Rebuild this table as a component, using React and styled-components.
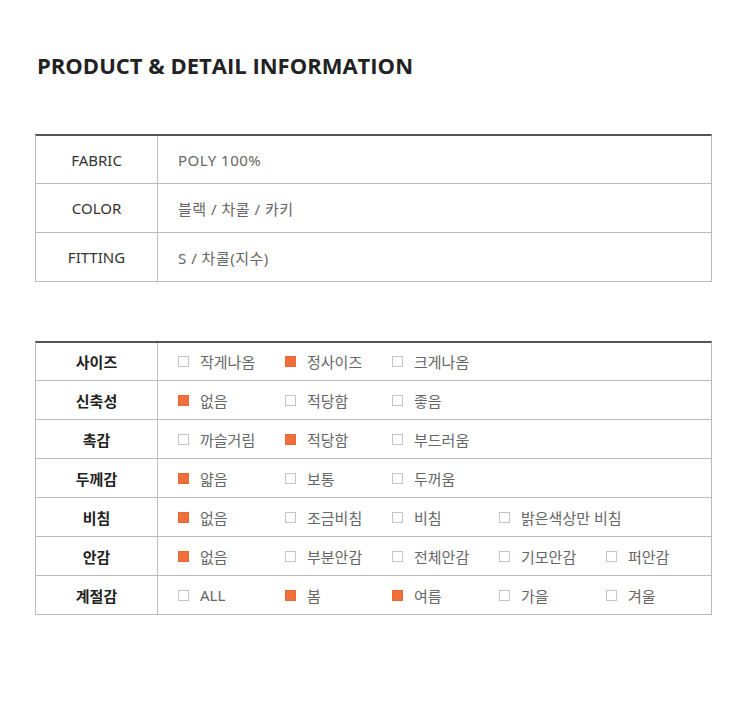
import styled, { createGlobalStyle } from "styled-components";

const GlobalStyle = createGlobalStyle`
  body {
    margin: 0;
    background: #fff;
    font-family: "Open Sans", "Noto Sans CJK KR", sans-serif;
  }
`;

const Page = styled.div`
  width: 677px;
  padding: 52px 0 0 35px;
`;

const Title = styled.h1`
  margin: 0 0 0 2px;
  font-size: 22px;
  line-height: 26px;
  font-weight: 700;
  color: #222;
`;

const Table = styled.div`
  margin-top: ${(p) => p.$top}px;
  border-top: 2px solid #555;
  border-left: 1px solid #bbb;
  border-right: 1px solid #bbb;
`;

const Row = styled.div`
  display: flex;
  box-sizing: border-box;
  height: ${(p) => p.$h}px;
  border-bottom: 1px solid #bbb;

  &:first-child {
    height: ${(p) => p.$h - 1}px;
  }
`;

const Label = styled.div`
  width: 121px;
  flex-shrink: 0;
  display: flex;
  align-items: center;
  justify-content: center;
  border-right: 1px solid #bbb;
  font-family: "Noto Sans", "Noto Sans CJK KR", sans-serif;
  font-size: 15px;
  font-weight: ${(p) => (p.$bold ? 700 : 400)};
  color: ${(p) => (p.$bold ? "#222" : "#333")};
`;

const Value = styled.div`
  flex: 1;
  display: flex;
  align-items: center;
  padding-left: 20px;
  font-family: "Noto Sans", "Noto Sans CJK KR", sans-serif;
  font-size: 15px;
  letter-spacing: ${(p) => (p.$wide ? "0.5px" : "0")};
  color: #666;
`;

const Option = styled.div`
  width: 107px;
  display: flex;
  align-items: center;
  gap: 11px;
  white-space: nowrap;
`;

const Box = styled.span`
  width: 11px;
  height: 11px;
  box-sizing: border-box;
  border: 1px solid ${(p) => (p.$on ? "#e8683a" : "#c4c4c4")};
  background: ${(p) => (p.$on ? "#f0703c" : "#fff")};
  flex-shrink: 0;
`;

const info = [
  ["FABRIC", "POLY 100%"],
  ["COLOR", "블랙 / 차콜 / 카키"],
  ["FITTING", "S / 차콜(지수)"],
];

const details = [
  ["사이즈", [["작게나옴", 0], ["정사이즈", 1], ["크게나옴", 0]]],
  ["신축성", [["없음", 1], ["적당함", 0], ["좋음", 0]]],
  ["촉감", [["까슬거림", 0], ["적당함", 1], ["부드러움", 0]]],
  ["두께감", [["얇음", 1], ["보통", 0], ["두꺼움", 0]]],
  ["비침", [["없음", 1], ["조금비침", 0], ["비침", 0], ["밝은색상만 비침", 0]]],
  ["안감", [["없음", 1], ["부분안감", 0], ["전체안감", 0], ["기모안감", 0], ["퍼안감", 0]]],
  ["계절감", [["ALL", 0], ["봄", 1], ["여름", 1], ["가을", 0], ["겨울", 0]]],
];

const App = () => {
  return (
    <Page>
      <GlobalStyle />
      <Title>PRODUCT &amp; DETAIL INFORMATION</Title>

      <Table $top={56}>
        {info.map(([k, v]) => (
          <Row key={k} $h={49}>
            <Label>{k}</Label>
            <Value $wide>{v}</Value>
          </Row>
        ))}
      </Table>

      <Table $top={59}>
        {details.map(([k, opts]) => (
          <Row key={k} $h={39}>
            <Label $bold>{k}</Label>
            <Value>
              {opts.map(([name, on]) => (
                <Option key={name}>
                  <Box $on={!!on} />
                  {name}
                </Option>
              ))}
            </Value>
          </Row>
        ))}
      </Table>
    </Page>
  );
};

export default App;
